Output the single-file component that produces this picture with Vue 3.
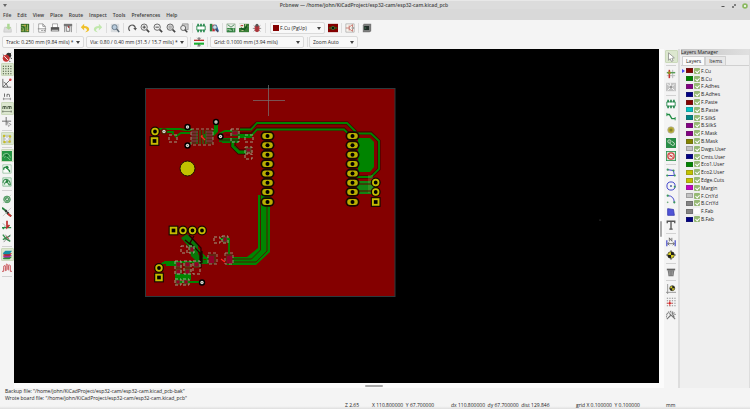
<script setup>
import { ref } from 'vue'

const menus = ['File', 'Edit', 'View', 'Place', 'Route', 'Inspect', 'Tools', 'Preferences', 'Help']

const topTools = [
  ['save', 'Save board'], null, ['board', 'Board setup'], null,
  ['page', 'Page settings'], ['print', 'Print'], ['plot', 'Plot'], null,
  ['undo', 'Undo'], ['redo', 'Redo'], null, ['find', 'Find'], null,
  ['refresh', 'Refresh'], ['zoomin', 'Zoom in'], ['zoomout', 'Zoom out'], ['zoomfit', 'Zoom to fit'], ['zoomsel', 'Zoom to selection'], null,
  ['footprint', 'Footprint editor'], ['library', 'Footprint viewer'], null,
  ['netlist', 'Load netlist'], ['update', 'Update from schematic'], ['bug', 'Design rules check'], null
]
const endTools = [['pair', 'Layer pair'], null, ['schematic', 'Open schematic'], null, ['console', 'Scripting console']]

const leftTools = [
  ['drc', 'Disable DRC'], ['grid', 'Show grid', true], ['polar', 'Polar coordinates'], ['inch', 'Inches'], ['mm', 'Millimetres', true], ['cursor', 'Cursor shape'], null,
  ['rats', 'Show ratsnest', true], null,
  ['zonefill', 'Show filled zones', true], ['zoneline', 'Hide zones'], ['zoneout', 'Zone outlines'], null,
  ['via', 'Via sketch'], ['track', 'Track sketch'], ['contrast', 'High contrast'], ['curve', 'Curved ratsnest'], null,
  ['layers', 'Layers manager', true], ['wave', 'Microwave tools'], null
]

const rightTools = [
  ['arrow', 'Select', true], null, ['net', 'Highlight net'], ['local', 'Local ratsnest'], null,
  ['footprint', 'Add footprint'], ['route', 'Route track'], ['viadot', 'Add via'], ['zone', 'Add zone'], ['keepout', 'Add keepout'], null,
  ['poly', 'Draw line'], ['circle', 'Draw circle'], ['arc', 'Draw arc'], ['shape', 'Draw polygon'], ['text', 'Add text'], null,
  ['dim', 'Add dimension'], ['target', 'Add target'], null, ['trash', 'Delete'], null,
  ['origin', 'Drill origin'], ['gridorigin', 'Grid origin'], ['measure', 'Measure']
]

const layers = ref([
  ['F.Cu', '#840000'], ['B.Cu', '#008400'], ['F.Adhes', '#840084'], ['B.Adhes', '#000084'], ['F.Paste', '#840000'],
  ['B.Paste', '#00c2c2'], ['F.SilkS', '#008484'], ['B.SilkS', '#840084'], ['F.Mask', '#840084'], ['B.Mask', '#848400'],
  ['Dwgs.User', '#c2c2c2'], ['Cmts.User', '#000084'], ['Eco1.User', '#008400'], ['Eco2.User', '#c2c200'], ['Edge.Cuts', '#c2c200'],
  ['Margin', '#c200c2'], ['F.CrtYd', '#c2c2c2'], ['B.CrtYd', '#848484'], ['F.Fab', '#848484'], ['B.Fab', '#000084']
].map(([name, color]) => ({ name, color, on: name !== 'F.Fab' })))

const activeLayer = ref('F.Cu')
const activeTab = ref('Layers')

const headerRows = [136, 145.3, 154.7, 164, 173.4, 182.8, 192, 202]
const roundPads = [[155, 131.5], [183, 230.5], [192.5, 230.5], [202, 230.5], [159, 268], [375.7, 182.5], [375.7, 192]]
const squarePads = [[154.5, 141], [173.5, 230.5], [159, 277.5], [375.7, 202]]
const vias = [[164, 131.5], [187.5, 127], [187.5, 145.5], [216, 122], [220.5, 136.5], [202, 282.5]]
const parts = [
  [169, 135, 8, 7], [231, 129, 8, 13], [245, 135, 8, 7], [245, 147, 7, 6], [245, 154, 7, 5],
  [181, 246, 6, 7], [189, 246, 5, 7], [214, 237, 6, 6], [222, 236, 6, 7],
  [175, 261, 6, 13], [184, 261, 7, 13], [193, 261, 7, 13], [175, 279, 6, 6], [183, 279, 6, 6]
]
const copper = [
  [176, 262, 5, 5], [185, 262, 5, 5], [194, 262, 5, 5], [176, 269, 5, 5], [185, 269, 5, 5],
  [176, 280, 4, 4], [184, 280, 4, 4], [190, 247, 4, 5], [223, 237, 4, 5], [246, 148, 5, 4], [232, 131, 6, 4]
]
</script>

<template>
  <svg class="sprite" aria-hidden="true">
    <symbol id="save" viewBox="0 0 12 12"><path d="M2 5l-1 4v2h9V8L9 5z" fill="#ddd" stroke="#bbb" stroke-width=".6" /><path d="M5 1h3v4h2L7 8 3 5h2z" fill="#acd893" /></symbol>
    <symbol id="board" viewBox="0 0 12 12"><path d="M1 1h10v10H1z" fill="#39702c" /><path d="M2 3h3l2 2v5M4 10V7L2 5M9 2v6" stroke="#a7c763" fill="none" /><path d="M5 2h2v2H5zM8 8h2v2H8zM2 8h1v2H2z" fill="#d6a94b" /></symbol>
    <symbol id="page" viewBox="0 0 12 12"><path d="M2 1h5l3 3v7H2z" fill="#fff" stroke="#777" stroke-width=".7" /><path d="M7 1v3h3M1 7h10M5 9h2M8 9h2" stroke="#777" fill="none" stroke-width=".9" /></symbol>
    <symbol id="print" viewBox="0 0 12 12"><path d="M3 1h6v5H3z" fill="#fff" stroke="#777" stroke-width=".7" /><path d="M1 5h10v5H1z" fill="#555" /><path d="M2 8h8v2H2z" fill="#bbb" /></symbol>
    <symbol id="plot" viewBox="0 0 12 12"><path d="M1 1h10v3H1z" fill="#777" /><path d="M2 4v7M10 4v7M4 4h4v6H4z" stroke="#777" fill="#eee" /><path d="M6 3l2 2-2 1z" fill="#a33" /></symbol>
    <symbol id="undo" viewBox="0 0 12 12"><path d="M1 5l4-4v2.500c4 0 6 2 6 4S9 11 6 11c2-1 3-2 2-3.500S6 6 5 6v3z" fill="#efc02b" /></symbol>
    <symbol id="redo" viewBox="0 0 12 12"><path d="M11 5L7 1v2.500c-4 0-6 2-6 4S3 11 6 11c-2-1-3-2-2-3.500S6 6 7 6v3z" fill="#c1e8ad" /></symbol>
    <symbol id="find" viewBox="0 0 12 12"><path d="M1 1h10v10H1z" fill="#d8dcdf" /><circle cx="5.500" cy="5" r="3" fill="#b8cbdc" stroke="#607384" /><path d="M8 7l3 4" stroke="#596671" stroke-width="1.800" /></symbol>
    <symbol id="refresh" viewBox="0 0 12 12"><path d="M3.500 9.500A4 4 0 1 1 10 6" fill="none" stroke="#555" stroke-width="1.400" /><path d="M7.500 6H12l-2 3z" fill="#555" /></symbol>
    <symbol id="zoomin" viewBox="0 0 12 12"><circle cx="5" cy="5" r="3.800" fill="#eee" stroke="#555" /><path d="M8 8l3 3" stroke="#444" stroke-width="2" /><path d="M3 5h4M5 3v4" stroke="#333" /></symbol>
    <symbol id="zoomout" viewBox="0 0 12 12"><circle cx="5" cy="5" r="3.800" fill="#eee" stroke="#555" /><path d="M8 8l3 3" stroke="#444" stroke-width="2" /><path d="M3 5h4" stroke="#333" /></symbol>
    <symbol id="zoomfit" viewBox="0 0 12 12"><circle cx="5" cy="5" r="3.800" fill="#ddd" stroke="#555" /><path d="M8 8l3 3" stroke="#444" stroke-width="2" /><path d="M3.500 3.500h3v3h-3z" fill="#bbb" stroke="#999" stroke-width=".5" /></symbol>
    <symbol id="zoomsel" viewBox="0 0 12 12"><path d="M4 1h7v7H4z" fill="#ccc" stroke="#777" stroke-width=".7" /><circle cx="5" cy="6" r="3" fill="#eee" stroke="#555" /><path d="M7 8l3 3" stroke="#444" stroke-width="1.700" /></symbol>
    <symbol id="footprint" viewBox="0 0 12 12"><path d="M1 3.500h10v5H1z" fill="#fff" stroke="#178040" /><path d="M2.500 1v3M6 1v3M9.500 1v3M2.500 8v3M6 8v3M9.500 8v3" stroke="#178040" stroke-width="1.800" /></symbol>
    <symbol id="library" viewBox="0 0 12 12"><path d="M1 1h3v9H1z" fill="#27823e" /><path d="M4 2h3v8H4z" fill="#c32d32" /><path d="M7 2l2 0 3 8H8z" fill="#2b62a9" /><circle cx="7" cy="5" r="2.500" fill="#cadcea" stroke="#547087" stroke-width=".8" /><path d="M8 7l3 4" stroke="#445" stroke-width="1.300" /></symbol>
    <symbol id="netlist" viewBox="0 0 12 12"><path d="M1 1h10v10H1z" fill="#e9eee8" stroke="#789978" stroke-width=".6" /><path d="M2 2l4 3 4-3" stroke="#367948" fill="none" /><path d="M1 6h10v5H1z" fill="#338242" /><path d="M2 9V7l2 2V7M5 7v2h2M8 7h2M9 7v3" stroke="#c9e3c9" stroke-width=".7" fill="none" /></symbol>
    <symbol id="update" viewBox="0 0 12 12"><path d="M0 1h12v10H0z" fill="#397d35" /><path d="M0 1h6v5H0z" fill="#eee" /><path d="M1 4h3l3 3M8 1v3h3M3 9h3" stroke="#d4d39e" fill="none" /><path d="M2 6l4 2 4-5" stroke="#145922" stroke-width="2" fill="none" /><path d="M2 3h3" stroke="#b42222" /></symbol>
    <symbol id="bug" viewBox="0 0 12 12"><path d="M2 3l8 7M10 3l-8 7M1 6.500h10" stroke="#666" stroke-width=".8" /><ellipse cx="6" cy="6.700" rx="3" ry="4.200" fill="#b63a40" /><circle cx="6" cy="2.700" r="1.800" fill="#555" /><path d="M6 4v7" stroke="#762126" stroke-width=".6" /></symbol>
    <symbol id="pair" viewBox="0 0 12 12"><path d="M0 1h12v10H0z" fill="#830000" /><path d="M1 6h3M8 6h3" stroke="#188623" stroke-width="1.200" /><circle cx="6" cy="6" r="2" fill="#111" stroke="#397b30" /></symbol>
    <symbol id="schematic" viewBox="0 0 12 12"><path d="M1 1h10v10H1z" fill="#f7f3ed" stroke="#999" stroke-width=".7" /><path d="M1 6h4M5 3v6M5 5l4-3v3M5 7l4 3V7" stroke="#b54b42" stroke-width=".8" fill="none" /><path d="M8 6h3" stroke="#555" /></symbol>
    <symbol id="console" viewBox="0 0 12 12"><path d="M2 1h9v9l-2 1H1V3z" fill="#777" /><path d="M2 3h7v6H2z" fill="#202b27" stroke="#aaa" stroke-width=".6" /><path d="M3 5l2 1-2 1" stroke="#4a8b61" stroke-width=".6" fill="none" /></symbol>
    <symbol id="drc" viewBox="0 0 12 12"><path d="M3 5L1 3M9 3l2-2M10 7l2 1M8 10l2 2" stroke="#333" /><circle cx="8" cy="4" r="3" fill="#333" /><circle cx="5" cy="7.500" r="3.700" fill="#bc3535" stroke="#d52929" /><path d="M2.500 5l5 5" stroke="#eee" stroke-width="1.200" /></symbol>
    <symbol id="grid" viewBox="0 0 12 12"><path d="M1 1.500h11M1 4.500h11M1 7.500h11M1 10.500h11" stroke="#35442b" stroke-width="1.300" stroke-dasharray="1.300 1.700" /></symbol>
    <symbol id="polar" viewBox="0 0 12 12"><path d="M1 1v10h10M1 11L10 2M2 5q4 1 5 6" stroke="#555" fill="none" /><circle cx="10" cy="2" r="1.500" fill="#d8363b" /></symbol>
    <symbol id="inch" viewBox="0 0 12 12"><path d="M3 3v4M6 7V4h2q1 0 1 1v2" fill="none" stroke="#555" /><path d="M1 9.500h10M2 8v3M10 8v3" stroke="#777" stroke-width=".8" /></symbol>
    <symbol id="mm" viewBox="0 0 12 12"><path d="M1 6V3h4v3M3 3v3M7 6V3h4v3M9 3v3" fill="none" stroke="#465540" /><path d="M0 9h12M1 7.500v3M11 7.500v3" stroke="#6e7966" stroke-width=".8" /></symbol>
    <symbol id="cursor" viewBox="0 0 12 12"><path d="M5 0v10M0 5h11" stroke="#555" /><path d="M6 6l5 3-2 .5-1 2z" fill="#fff" stroke="#777" stroke-width=".7" /></symbol>
    <symbol id="rats" viewBox="0 0 12 12"><path d="M1 1h10v10H1z" fill="#c2c8bd" /><path d="M3 3l6 6M9 3L3 9" stroke="#eef" stroke-width="1.400" /><g fill="#c9bd24"><circle cx="2.500" cy="2.500" r="1.500" /><circle cx="9.500" cy="3" r="1.500" /><circle cx="3" cy="9.500" r="1.500" /><circle cx="9" cy="9" r="1.500" /></g></symbol>
    <symbol id="zonefill" viewBox="0 0 12 12"><path d="M0 0h12v12H0z" fill="#259544" /><path d="M1 7q0-4 4-4t5 5M3 8q1-3 3-1l4 4" fill="none" stroke="#9bd2a2" /><circle cx="5.500" cy="5.500" r="1.500" fill="#166c2e" /></symbol>
    <symbol id="zoneline" viewBox="0 0 12 12"><path d="M1 1h10v10H1z" fill="#fafcfa" stroke="#75ad82" stroke-width=".7" /><path d="M2 7q0-4 3-3l4 4v2" fill="none" stroke="#258541" stroke-width="1.600" /><circle cx="6" cy="4" r="1.800" fill="#258541" /></symbol>
    <symbol id="zoneout" viewBox="0 0 12 12"><path d="M1 1h10v10H1z" fill="#e9f4eb" stroke="#55a46a" stroke-width=".7" /><path d="M1 7q1-5 5-4t4 7M3 9q0-4 4-2l2 3" fill="none" stroke="#398f50" stroke-width="1.300" /><circle cx="6" cy="5" r="1.500" fill="#247d3b" /></symbol>
    <symbol id="via" viewBox="0 0 12 12"><circle cx="6" cy="6.500" r="4" fill="#82b88e" stroke="#469359" /><circle cx="6" cy="6.500" r="1.800" fill="#d7e9da" stroke="#257b3c" /><path d="M1 11L11 1" stroke="#b7ccb8" stroke-width=".8" /></symbol>
    <symbol id="track" viewBox="0 0 12 12"><path d="M0 1l4 3 3 4 4 3" fill="none" stroke="#268240" stroke-width="2.300" /><path d="M4 4l4 4" stroke="#333" stroke-width="2.500" /><path d="M7 8l4 3" stroke="#d12d31" stroke-width="2.300" /><path d="M1 11L11 1" stroke="#bbb" stroke-width=".8" /></symbol>
    <symbol id="contrast" viewBox="0 0 12 12"><path d="M0 9h11M1 11l3-3" stroke="#298b48" stroke-width="1.500" /><path d="M6 1v8l3-3" fill="none" stroke="#bd2b2b" stroke-width="2" /><path d="M1 4l3 3" stroke="#999" /></symbol>
    <symbol id="curve" viewBox="0 0 12 12"><path d="M1 2l4 5 5 3M1 8l4-2 5-3" fill="none" stroke="#338b4b" stroke-width="1.700" /><path d="M4 2l5 7M2 11l8-9" stroke="#666" stroke-width=".8" /><path d="M5 4l3 3" stroke="#c93b3b" /></symbol>
    <symbol id="layers" viewBox="0 0 12 12"><path d="M1 10l3-2h8l-3 3H2z" fill="#2a8e3a" /><path d="M1 8l3-2h8L9 9H2z" fill="#a22fa0" /><path d="M1 6l3-2h8L9 7H2z" fill="#b62525" /><path d="M1 4l3-3h8L9 5H2z" fill="#158da5" /></symbol>
    <symbol id="wave" viewBox="0 0 12 12"><path d="M0 10h2V5q0-2 1-2t1 2v4q1 1 1 0V2q1-2 2 0v6q1 1 1 0V3q1-1 2 0v7h2" fill="none" stroke="#c64c50" stroke-width="1.100" /></symbol>
    <symbol id="arrow" viewBox="0 0 12 12"><path d="M3 1l7 6-3 .5 1.500 3-2 .8L5 8 3 10z" fill="#fff" stroke="#777" stroke-width=".8" /></symbol>
    <symbol id="net" viewBox="0 0 12 12"><path d="M1 4h10M1 8h10M8 1v10" stroke="#bbb" stroke-width="1.200" /><path d="M4 1v10" stroke="#c33232" stroke-width="1.800" /><path d="M1 4.500h10" stroke="#489849" stroke-width="1.500" /><circle cx="4" cy="4.500" r="1.800" fill="#9a8b26" /></symbol>
    <symbol id="local" viewBox="0 0 12 12"><path d="M0 1h12v10H0z" fill="#c4c4c4" /><path d="M1 2l5 4 4-3M2 10l4-4 4 4M6 6L5 1" fill="none" stroke="#f5f5f5" stroke-width="1.200" /><circle cx="6" cy="6" r="1.500" fill="#999" /></symbol>
    <symbol id="route" viewBox="0 0 12 12"><path d="M1 3h3l3 5h4" fill="none" stroke="#218d43" stroke-width="1.600" /><path d="M1 1v4M11 6v4" stroke="#218d43" /></symbol>
    <symbol id="viadot" viewBox="0 0 12 12"><circle cx="6" cy="6" r="4" fill="#b8ad31" stroke="#aaa" stroke-width=".8" /><circle cx="6" cy="6" r="1.800" fill="#82802f" /></symbol>
    <symbol id="zone" viewBox="0 0 12 12"><path d="M0 0h12v12H0z" fill="#298c47" /><circle cx="4" cy="4" r="2" fill="#5d9c6b" stroke="#bad9bf" /><path d="M4 6l4 3q3 0 2-3L7 4" stroke="#bad9bf" stroke-width="1.200" fill="none" /></symbol>
    <symbol id="keepout" viewBox="0 0 12 12"><path d="M0 0h12v12H0z" fill="#369554" /><path d="M1 1h10v10H1z" fill="#cfe3d3" /><circle cx="6" cy="6" r="3.800" fill="#f5eaea" stroke="#d34242" stroke-width="1.500" /><path d="M4 4l4 4M4 6h4" stroke="#d34242" stroke-width="1.200" /></symbol>
    <symbol id="poly" viewBox="0 0 12 12"><path d="M2 2l7 1 1 6H1" fill="none" stroke="#4549ce" stroke-width="1.200" /><g fill="#3b9a5a"><circle cx="2" cy="2" r="1.300" /><circle cx="9" cy="3" r="1.300" /><circle cx="10.500" cy="9" r="1.300" /><circle cx="1.500" cy="9" r="1.300" /></g></symbol>
    <symbol id="circle" viewBox="0 0 12 12"><circle cx="6" cy="6" r="4.900" fill="none" stroke="#4549ce" stroke-width="1.200" /><circle cx="6" cy="6" r="1.100" fill="#3c55a0" /><circle cx="10.500" cy="7" r="1.200" fill="#3b9a5a" /></symbol>
    <symbol id="arc" viewBox="0 0 12 12"><path d="M2 2q8 0 8 9" fill="none" stroke="#4549ce" stroke-width="1.200" /><circle cx="2" cy="2" r="1.300" fill="#3b9a5a" /><circle cx="10" cy="10" r="1.300" fill="#3b9a5a" /><circle cx="2" cy="10" r="1" fill="#6aa879" /></symbol>
    <symbol id="shape" viewBox="0 0 12 12"><path d="M2 2l7 1 1 7H2z" fill="#5054d7" stroke="#383caf" /></symbol>
    <symbol id="text" viewBox="0 0 12 12"><path d="M1.500 4V1.500h9V4M6 2v9M4 11h4" fill="none" stroke="#555" stroke-width="1.600" /></symbol>
    <symbol id="dim" viewBox="0 0 12 12"><path d="M1 4v7M11 4v7" stroke="#3f45c7" stroke-width="1.400" /><path d="M2 8h8M4 6L2 8l2 2M8 6l2 2-2 2M4 5V1l3 4V1" fill="none" stroke="#555" stroke-width=".9" /></symbol>
    <symbol id="target" viewBox="0 0 12 12"><path d="M6 0v12M0 6h12" stroke="#333" stroke-width=".8" /><circle cx="6" cy="6" r="4" fill="#d8cd20" stroke="#333" stroke-width=".8" /><path d="M6 6V2a4 4 0 0 1 4 4zM6 6v4a4 4 0 0 1-4-4z" fill="#222" /></symbol>
    <symbol id="trash" viewBox="0 0 12 12"><path d="M2 4h8l-1 7H3z" fill="#777" /><path d="M1 2h10v2H1z" fill="#666" /><path d="M4 5v5M6 5v5M8 5v5" stroke="#bbb" stroke-width=".6" /></symbol>
    <symbol id="origin" viewBox="0 0 12 12"><path d="M2 0v12M0 10h12" stroke="#888" /><circle cx="7.500" cy="5" r="3" fill="#d8cd20" stroke="#333" stroke-width=".8" /><path d="M7.500 5V2a3 3 0 0 1 3 3zM7.500 5v3a3 3 0 0 1-3-3z" fill="#222" /></symbol>
    <symbol id="gridorigin" viewBox="0 0 12 12"><path d="M1 1.500h11M1 4.500h11M1 7.500h11M1 10.500h11" stroke="#777" stroke-dasharray="1.500 1.500" /><path d="M4.500 4v7M1 7.500h7" stroke="#dc4848" /><circle cx="4.500" cy="7.500" r="1.300" fill="#dc2020" /></symbol>
    <symbol id="measure" viewBox="0 0 12 12"><path d="M0 9q1-7 6-7 4 1 5 4" fill="none" stroke="#888" stroke-width="2" stroke-dasharray="1.400 .8" /><path d="M4 4l7 7M7 3l3 6M1 11l5-5" stroke="#777" stroke-width="1.300" /></symbol>
    <symbol id="tracks" viewBox="0 0 12 12"><path d="M0 4h12" stroke="#c02b2b" stroke-width="1.600" /><path d="M0 8h12" stroke="#1bb032" stroke-width="2.500" /><path d="M6 0v3M6 9v3M4 1l2 2 2-2M4 11l2-2 2 2" stroke="#333" stroke-width=".8" fill="none" /></symbol>
  </svg>

  <div class="app">
    <header class="titlebar">
      <svg class="roll" viewBox="0 0 4 4"><path d="M0 0h4L2 3z" fill="#666" /></svg>
      <h1>Pcbnew — /home/john/KiCadProject/esp32-cam/esp32-cam.kicad_pcb</h1>
      <div class="window-buttons">
        <button aria-label="Minimize"><svg viewBox="0 0 6 6"><path d="M1.500 3.500h3" stroke="#555" /></svg></button>
        <button aria-label="Restore"><svg viewBox="0 0 6 6"><path d="M1.500 4.500l3-3M3 1.500h1.500V3M1.500 3v1.500H3" stroke="#666" stroke-width=".8" fill="none" /></svg></button>
        <button aria-label="Close"><svg viewBox="0 0 6 6"><circle cx="3" cy="3" r="2.800" fill="#8cb963" /><path d="M2 2l2 2M4 2L2 4" stroke="#fff" stroke-width=".8" /></svg></button>
      </div>
    </header>

    <nav class="menubar"><button v-for="m in menus" :key="m">{{ m }}</button></nav>

    <div class="toolbar tools">
      <template v-for="(t, i) in topTools" :key="i">
        <button v-if="t" class="tool" :aria-label="t[1]"><svg><use :href="'#' + t[0]" /></svg></button>
        <span v-else class="sep"></span>
      </template>
      <div class="combo layer-combo">
        <span class="chip"></span>
        <select aria-label="Active layer"><option>F.Cu (PgUp)</option></select>
      </div>
      <template v-for="(t, i) in endTools" :key="'e' + i">
        <button v-if="t" class="tool" :aria-label="t[1]"><svg><use :href="'#' + t[0]" /></svg></button>
        <span v-else class="sep"></span>
      </template>
    </div>

    <div class="toolbar options">
      <div class="combo track"><select aria-label="Track width"><option>Track: 0.250 mm (9.84 mils) *</option></select></div>
      <div class="combo via"><select aria-label="Via size"><option>Via: 0.80 / 0.40 mm (31.5 / 15.7 mils) *</option></select></div>
      <span class="sep"></span>
      <button class="tool" aria-label="Automatic track width"><svg><use href="#tracks" /></svg></button>
      <span class="sep"></span>
      <div class="combo grid-size"><select aria-label="Grid"><option>Grid: 0.1000 mm (3.94 mils)</option></select></div>
      <span class="sep"></span>
      <div class="combo zoom"><select aria-label="Zoom"><option>Zoom Auto</option></select></div>
    </div>

    <div class="workspace">
      <div class="side left">
        <template v-for="(t, i) in leftTools" :key="i">
          <button v-if="t" class="tool" :class="{ on: t[2] }" :aria-label="t[1]"><svg><use :href="'#' + t[0]" /></svg></button>
          <span v-else class="rule"></span>
        </template>
      </div>

      <main class="viewport">
        <svg class="canvas" viewBox="14 49 645 334" preserveAspectRatio="xMinYMin slice" role="img" aria-label="Circuit board">
          <rect x="145.500" y="88.500" width="249.500" height="208" fill="#840000" stroke="#2c3a3d" />
          <g stroke="#4e0000" stroke-width="3.500" fill="none">
            <path d="M240 129h10l7-6h90l9 9M232 134h19l6-5h87l6 6M357 133h14l8 8v28l-8 8h-14" />
          </g>
          <g stroke="#008400" stroke-width="1.800" fill="none">
            <path d="M240 129.500h11l6-6.500h90l9 9M232 135h20l5-5.500h87l6 6M357 133.500h14l8 7.500v28l-8 8h-14" />
            <path d="M155 129h25l5 1h8M164 132h9v3M175 137l6-4h9M187.500 127l8 6M187.500 145.500l9-7M220 139h12M222 142h16M219 134l6-3h7M216 122v10" />
            <path d="M238 137h12M251 134v4" />
            <path d="M159 267l4-4h13M166 265h10M180 282h19M164 262h36" />
            <path d="M220 239h9v19M192 249h5l13 13M199 258h14M195 263h18" />
          </g>
          <path d="M216 123v8l-5 5h-7" fill="none" stroke="#008400" stroke-width="4" />
          <path d="M233 142v4l6 6h7" fill="none" stroke="#300" stroke-width="5" />
          <path d="M233 142v4l6 6h7" fill="none" stroke="#008400" stroke-width="3.500" />
          <path d="M234.500 142v4l5 4h7" fill="none" stroke="#600000" stroke-width=".7" />
          <path d="M219 138h20v4h-20z" fill="#076f08" />
          <path d="M219 140h20M226 135h13" stroke="#500000" stroke-width=".8" />
          <path d="M358 138h12l4 4v25l-4 5h-12z" fill="#008400" />
          <path d="M357 181h18v13h-18z" fill="#138413" />
          <path d="M368 175h5v18h-5z" fill="#70a540" opacity=".3" />
          <path d="M357 184h18M357 191h18" stroke="#600000" />
          <path d="M258 195h12v57l-14 13h-29v-8h20l11-9z" fill="#008400" />
          <path d="M260.500 195v55l-9 9h-24M267 204v47l-11 11h-29" fill="none" stroke="#600000" stroke-width=".8" />
          <path d="M187 234l11 11v9l6 6h7v4h-12l-8-8-2-9-8-9z" fill="#087608" />
          <path d="M189 235l12 13v20M194 236l-4 7 10 10v10M202 251v12M185 240l6 5" fill="none" stroke="#200" stroke-width="1.300" />
          <path d="M175 274h16v6h-16z" fill="#008400" />

          <g>
            <path d="M191 130h7v14h-7zM205 130h8v14h-8zM208 254h8v10h-8zM226 254h7v10h-7z" fill="#5f2510" />
            <path d="M197 131v13M206 131v13M200 130v14M203 130v14" stroke="#147a16" stroke-width="1.100" />
            <path d="M191 132h7M191 135h7M191 138h7M191 141h7M206 132h7M206 135h7M206 138h7M206 141h7" stroke="#84364e" stroke-width="1.200" />
            <rect v-for="(c, i) in copper" :key="'c' + i" :x="c[0]" :y="c[1]" :width="c[2]" :height="c[3]" fill="#940025" stroke="#207b20" stroke-width=".7" />
            <path d="M209 256h5v7h-5zM227 256h5v7h-5z" fill="#900028" />
            <path d="M191 129h22v16h-22zM208 253h9v11h-9zM225 253h8v11h-8z" fill="none" stroke="#9aa68a" stroke-width=".8" stroke-dasharray="3 2" />
            <rect v-for="(p, i) in parts" :key="'p' + i" :x="p[0]" :y="p[1]" :width="p[2]" :height="p[3]" fill="none" stroke="#a3b092" stroke-width=".9" stroke-dasharray="3 2" />
            <path d="M201 136l4 4M202 135v3M221 259l4 3" stroke="#f22" stroke-width="1.200" />
          </g>

          <g v-for="x in [267.5, 352.5]" :key="x">
            <g v-for="y in headerRows" :key="y">
              <rect :x="x - 7" :y="y - 4.700" width="14" height="9.400" rx="4.700" fill="#160800" />
              <rect :x="x - 5.300" :y="y - 3" width="10.600" height="6" rx="3" fill="#b9ae00" />
              <circle :cx="x" :cy="y" r="2" fill="#000" />
            </g>
          </g>
          <g v-for="(p, i) in roundPads" :key="'r' + i">
            <circle :cx="p[0]" :cy="p[1]" r="5" fill="#160800" />
            <circle :cx="p[0]" :cy="p[1]" r="2.800" fill="#000" stroke="#c5bb00" stroke-width="1.800" />
          </g>
          <g v-for="(p, i) in squarePads" :key="'s' + i">
            <rect :x="p[0] - 4.900" :y="p[1] - 4.900" width="9.800" height="9.800" fill="#160800" />
            <rect :x="p[0] - 2.800" :y="p[1] - 2.800" width="5.600" height="5.600" fill="#000" stroke="#c5bb00" stroke-width="1.900" />
          </g>
          <g v-for="(v, i) in vias" :key="'v' + i">
            <circle :cx="v[0]" :cy="v[1]" r="3.200" :fill="i ? '#000' : '#531d00'" />
            <circle :cx="v[0]" :cy="v[1]" r="1.700" fill="#d8d8d0" />
            <circle :cx="v[0]" :cy="v[1]" r=".6" fill="#665" />
          </g>
          <circle cx="187.500" cy="168.500" r="7.500" fill="#c2c200" stroke="#211100" />
          <path d="M268.500 85v31M253 100.500h32" stroke="#777" stroke-width=".7" />
          <circle cx="600" cy="220" r=".6" fill="#555" />
        </svg>
        <div class="scroll-y"><span></span></div>
        <div class="scroll-x"><span></span></div>
      </main>

      <div class="side right">
        <template v-for="(t, i) in rightTools" :key="i">
          <button v-if="t" class="tool" :class="{ on: t[2] }" :aria-label="t[1]"><svg><use :href="'#' + t[0]" /></svg></button>
          <span v-else class="rule"></span>
        </template>
      </div>

      <aside class="manager">
        <h2>Layers Manager</h2>
        <div class="tabs" role="tablist">
          <button v-for="t in ['Layers', 'Items']" :key="t" role="tab" :aria-selected="activeTab === t" :class="{ active: activeTab === t }" @click="activeTab = t">{{ t }}</button>
        </div>
        <ul>
          <li v-for="l in layers" :key="l.name">
            <span class="pointer" :class="{ shown: l.name === activeLayer }"></span>
            <button class="swatch" :style="{ background: l.color }" :aria-label="'Select ' + l.name" @click="activeLayer = l.name"></button>
            <input :id="l.name" v-model="l.on" type="checkbox">
            <label :for="l.name">{{ l.name }}</label>
          </li>
        </ul>
      </aside>
    </div>

    <section class="messages">
      <p>Backup file: "/home/john/KiCadProject/esp32-cam/esp32-cam.kicad_pcb-bak"</p>
      <p>Wrote board file: "/home/john/KiCadProject/esp32-cam/esp32-cam.kicad_pcb"</p>
    </section>
    <footer class="status">
      <span>Z 2.65</span>
      <span>X 110.800000&nbsp; Y 67.700000</span>
      <span>dx 110.800000&nbsp; dy 67.700000&nbsp; dist 129.846</span>
      <span>grid X 0.100000&nbsp; Y 0.100000</span>
      <span>mm</span>
    </footer>
  </div>
</template>

<style>
body { margin: 0; }
</style>

<style scoped>
* { box-sizing: border-box; }
.sprite { position: absolute; width: 0; height: 0; }
.app {
  display: flex; flex-direction: column; min-height: 100vh;
  font: 5px/7px "Open Sans", "Noto Sans", sans-serif; color: #222; background: #f4f4f4;
}
h1, h2, p, ul { margin: 0; padding: 0; font: inherit; }
button, select, input { margin: 0; padding: 0; border: 0; background: none; font: inherit; color: inherit; }
.titlebar { display: grid; grid-template-columns: 18px 1fr 40px; align-items: center; height: 9px; padding: 1px 2px 0; background: #dcdcdc; border-top: 1px solid #e8e8e8; }
.titlebar h1 { text-align: center; font-weight: 600; color: #444; }
.roll { width: 4px; height: 4px; margin-left: 1px; }
.window-buttons { display: flex; justify-content: flex-end; gap: 5px; }
.window-buttons button, .window-buttons svg { display: block; width: 6px; height: 6px; }
.menubar { display: flex; align-items: center; gap: 6px; height: 11px; padding: 1px 3px 0; background: #d9d9d9; font-weight: 600; color: #3c3c3c; }
.toolbar { display: flex; align-items: center; background: #f4f4f4; }
.tools { height: 15px; padding-left: 1px; }
.options { height: 14px; padding-left: 2px; }
.tool { display: flex; flex: none; align-items: center; justify-content: center; width: 13px; height: 13px; }
.tool svg { flex: none; width: 10px; height: 10px; }
.sep { flex: none; width: 4px; height: 10px; background: linear-gradient(#ddd, #ddd) center / 1px 100% no-repeat; }
.combo { position: relative; display: flex; align-items: center; height: 12px; border: 1px solid #dadada; border-radius: 2px; background: #f8f8f8; }
.combo select { width: 100%; height: 100%; padding: 0 3px; appearance: none; line-height: 10px; }
.combo::after { content: ""; position: absolute; right: 3px; top: 4px; border: 2px solid transparent; border-top: 3px solid #444; border-bottom: 0; pointer-events: none; }
.layer-combo { width: 55px; margin: 0 1px 0 3px; }
.layer-combo select { padding: 0 1px; }
.chip { flex: none; width: 6px; height: 6px; margin-left: 2px; background: #840000; }
.track { width: 82px; margin-right: 2px; }
.via { width: 102px; }
.grid-size { width: 94px; margin: 0 1px; }
.zoom { width: 49px; }
.workspace { display: flex; flex: 1; min-height: 0; }
.side { display: flex; flex: none; flex-direction: column; align-items: center; padding-top: 1px; width: 14px; }
.side .tool.on { background: #dce7cf; border: 1px solid #cbd9bb; border-radius: 1px; }
.rule { flex: none; width: 10px; height: 4px; background: linear-gradient(#d2d2d2, #d2d2d2) center / 100% 1px no-repeat; }
.viewport { display: grid; flex: 1; grid-template-columns: minmax(0, 1fr) 5px; grid-template-rows: minmax(0, 1fr) 5px; min-width: 0; background: #fbfbfb; }
.canvas { display: block; width: 100%; height: 100%; background: #000; }
.scroll-y, .scroll-x { display: flex; align-items: center; justify-content: center; }
.scroll-y { justify-content: flex-start; padding-left: 1px; }
.scroll-y span { width: 2px; height: 16px; margin-top: 26px; border-radius: 1px; background: #aaa; }
.scroll-x span { width: 18px; height: 2px; margin-left: 74px; border-radius: 1px; background: #aaa; }
.manager { flex: none; width: 72px; padding-left: 1px; border-left: 2px solid #ddd; background: #efefef; border-right: 1px solid #ddd; }
.manager h2 { height: 6px; line-height: 6px; background: linear-gradient(90deg, #c4c4c4, #e0e0e0); }
.tabs { display: flex; align-items: flex-end; height: 11px; padding-left: 1px; border-bottom: 1px solid #d0d0d0; }
.tabs button { height: 9px; padding: 0 3px; border: 1px solid #d0d0d0; border-bottom: 0; border-radius: 1px 1px 0 0; background: #e8e8e8; line-height: 8px; }
.tabs .active { background: #fafafa; }
.manager ul { display: grid; grid-auto-rows: 1fr; height: 156px; margin-top: 1px; padding-left: 1px; list-style: none; }
.manager li { display: flex; align-items: center; gap: 1px; line-height: 6px; }
.pointer { width: 3px; height: 4px; }
.pointer.shown { background: #4646f5; clip-path: polygon(0 0, 100% 50%, 0 100%); }
.swatch { width: 7px; height: 5px; border: 1px solid #4444; }
.manager input { position: relative; width: 6px; height: 6px; appearance: none; border-radius: 1px; background: #fbfbfb; }
.manager input:checked { background: #96b974; }
.manager input:checked::after { content: ""; position: absolute; left: 2px; top: 1px; width: 2px; height: 3px; border: solid #fff; border-width: 0 1px 1px 0; transform: rotate(45deg); }
.messages { height: 14px; padding-left: 5px; background: #f4f4f4; }
.status { display: grid; grid-template-columns: 27fr 79fr 125fr 90fr 84fr; align-items: center; height: 7px; padding-left: 46%; background: linear-gradient(#f4f4f4 60%, #dedede); white-space: nowrap; }
.status span { min-width: 0; }
</style>
